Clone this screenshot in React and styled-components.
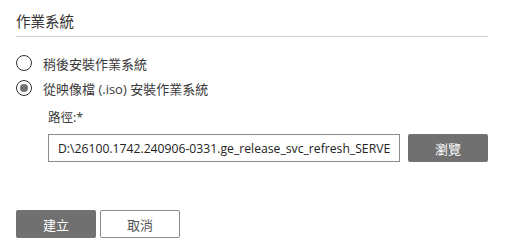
import styled, { createGlobalStyle } from 'styled-components';

const Global = createGlobalStyle`
    body {
        margin: 0;
        background: #fff;
        font-family: "Open Sans", "Noto Sans CJK TC", sans-serif;
        color: #333;
    }
`;

export default function App() {
    return (
        <>
            <Global />
            <Page>
                <Section>
                    <Title>作業系統</Title>
                    <Options>
                        <Option>
                            <Radio />
                            稍後安裝作業系統
                        </Option>
                        <Option>
                            <Radio checked />
                            從映像檔 (.iso) 安裝作業系統
                        </Option>
                    </Options>
                    <PathBlock>
                        <Label>路徑:*</Label>
                        <PathRow>
                            <PathInput
                                readOnly
                                value="D:\26100.1742.240906-0331.ge_release_svc_refresh_SERVER_EVAL_x64FRE_zh-tw.iso"
                            />
                            <GrayButton>瀏覽</GrayButton>
                        </PathRow>
                    </PathBlock>
                </Section>
                <Footer>
                    <GrayButton>建立</GrayButton>
                    <OutlineButton>取消</OutlineButton>
                </Footer>
            </Page>
        </>
    );
}

const Page = styled.div`
    width: 506px;
    height: 248px;
    padding: 0 18px 0 16px;
    box-sizing: border-box;
`;

const Section = styled.div`
    display: flex;
    flex-direction: column;
`;

const Title = styled.div`
    height: 37px;
    box-sizing: border-box;
    padding-top: 10px;
    font-size: 14.5px;
    border-bottom: 1px solid #d2d2d2;
    color: #333;
`;

const Options = styled.div`
    display: flex;
    flex-direction: column;
    gap: 9px;
    margin-top: 18px;
`;

const Option = styled.label`
    display: flex;
    align-items: center;
    gap: 11px;
    height: 16px;
    font-size: 13px;
    color: #3a3a3a;
`;

const Radio = styled.span`
    width: 16px;
    height: 16px;
    box-sizing: border-box;
    border-radius: 50%;
    border: 1px solid #333;
    display: flex;
    align-items: center;
    justify-content: center;

    &::after {
        content: '';
        display: ${(p) => (p.checked ? 'block' : 'none')};
        width: 8px;
        height: 8px;
        border-radius: 50%;
        background: #707070;
    }
`;

const PathBlock = styled.div`
    margin-left: 32px;
    margin-top: 15px;
    display: flex;
    flex-direction: column;
    gap: 9px;
`;

const Label = styled.div`
    font-size: 12.5px;
    color: #3a3a3a;
    height: 14px;
    line-height: 14px;
`;

const PathRow = styled.div`
    display: flex;
    align-items: center;
    gap: 8px;
`;

const PathInput = styled.input`
    width: 352px;
    height: 28px;
    box-sizing: border-box;
    border: 1px solid #8a8a8a;
    border-radius: 0;
    padding: 0 9px;
    font-family: "Open Sans", sans-serif;
    font-size: 12.2px;
    color: #222;
    outline: none;
`;

const GrayButton = styled.button`
    width: 80px;
    height: 28px;
    border: none;
    border-radius: 2px;
    background: #707070;
    color: #fff;
    font-family: "Noto Sans CJK TC", sans-serif;
    font-size: 13px;
`;

const OutlineButton = styled.button`
    width: 80px;
    height: 28px;
    box-sizing: border-box;
    border: 1px solid #8a8a8a;
    border-radius: 2px;
    background: #fff;
    color: #555;
    font-family: "Noto Sans CJK TC", sans-serif;
    font-size: 13px;
`;

const Footer = styled.div`
    display: flex;
    gap: 4px;
    margin-top: 48px;
`;
